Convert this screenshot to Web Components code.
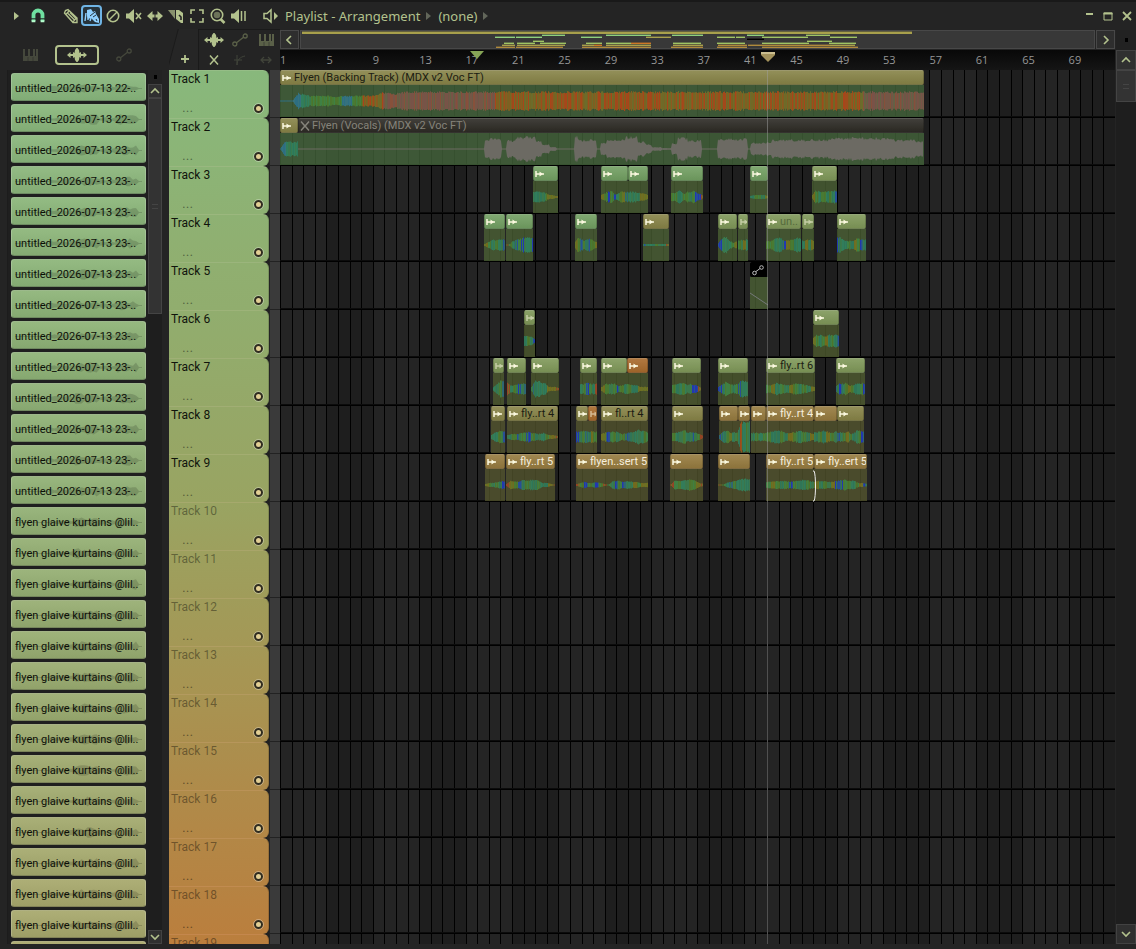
<!DOCTYPE html>
<html lang="en">
<head>
<meta charset="utf-8">
<title>Playlist - Arrangement</title>
<style>
  html, body { margin: 0; background: #242424; }
  body { font-family: Roboto, "Liberation Sans", sans-serif; color: #b3c28d; }
</style>
</head>
<body>
<fl-playlist></fl-playlist>

<script>
(function () {

  const TICKS = 835;   // length of the visible timeline
  const BARS = 72;

  // ===== ICONS =====
  const ICONS = {
    play: [8, 12, '<path d="M1 2l5 4-5 4z" fill="currentColor"/>'],
    magnet: [16, 16, '<path d="M3.500 13V7a4.500 4.500 0 0 1 9 0v6" fill="none" stroke="#6fe0a0" stroke-width="3.800"/><path d="M1 10.800h5M10 10.800h5" stroke="#242424"/><path d="M1.600 13.300h3.800M10.600 13.300h3.800" stroke="#b8ffd0" stroke-width="2"/>'],
    pencil: [16, 16, '<path d="M1.500 5l1-2.500L5 1.500l9 8.500v4.500H10zM5 5.500l6.500 6.500M3 6.500L6 3M9.500 14l4.500-4.500M7 4.500l5.500 5.500" fill="none" stroke="currentColor" stroke-width="1.400"/>'],
    brush: [16, 16, '<path d="M3 2l4-1 2 3 2-1 1 3 3 5v4l-4-1-4-4-3 1-1-3z" fill="currentColor"/><path d="M2 5L1 13M4 8v4M7 10l-1 3" fill="none" stroke="currentColor" stroke-width="1.400"/><path d="M6 8l5-4M9 9l3-2M12 11l1 2" stroke="#26333b" stroke-width="1"/>'],
    ban: [16, 16, '<circle cx="8" cy="8" r="5.700" fill="none" stroke="currentColor" stroke-width="1.600"/><path d="M4 12l8-8" stroke="currentColor" stroke-width="1.500"/>'],
    mute: [16, 16, '<path d="M0 5.500h3L8 1v14l-5-4.500H0z" fill="currentColor"/><path d="M10 5l5 6M15 5l-5 6" stroke="currentColor" stroke-width="1.600"/>'],
    slip: [16, 16, '<path d="M0 8l5.500-5v3.500h5V3L16 8l-5.500 5V9.500h-5V13z" fill="currentColor"/><path d="M8 4v8" stroke="#242424" stroke-width="1"/>'],
    slice: [16, 16, '<path d="M0 2h7v9z" fill="currentColor" opacity=".7"/><path d="M8 2h3l4 3v10h-2L8 11z" fill="currentColor"/><path d="M11 7l2 2v3" fill="none" stroke="#242424" stroke-width="1.600"/>'],
    select: [16, 16, '<path d="M2 6V2h4M10 2h4v4M14 10v4h-4M6 14H2v-4" fill="none" stroke="currentColor" stroke-width="1.600"/>'],
    zoom: [16, 16, '<circle cx="7" cy="7" r="5.700" fill="none" stroke="currentColor" stroke-width="1.600"/><circle cx="7" cy="7" r="3.300" fill="currentColor" opacity=".5"/><path d="M10.500 11l4 4" stroke="currentColor" stroke-width="2.600"/>'],
    preview: [16, 16, '<path d="M0 5.500h3L8 1v14l-5-4.500H0z" fill="currentColor"/><path d="M10.500 3v10M14 3v10" stroke="currentColor" stroke-width="1.500"/>'],
    speaker: [16, 16, '<path d="M1 5.500h3L8 2v12l-4-3.500H1z" fill="none" stroke="currentColor" stroke-width="1.500"/><path d="M11 4l4 4-4 4z" fill="currentColor"/>'],
    piano: [15, 12, '<path d="M0 0h2v7h3V0h2v7h3V0h2v7h1V0h2v12H0z" fill="currentColor"/><path d="M5 8v4M10 8v4" stroke="#242424" stroke-width=".5"/>'],
    wave: [20, 14, '<path d="M0 7l3.500-3v2H6V4l1.500 1L8 2l1.500-2h1L12 2l.5 3L14 4v2h2.500V4L20 7l-3.500 3V8H14v2l-1.500-1-.5 3-1.500 2h-1L8 12l-.5-3L6 10V8H3.500v2z" fill="currentColor"/>'],
    auto: [16, 14, '<path d="M4.500 9.700l7-5.400" stroke="currentColor" stroke-width="1.300"/><circle cx="2.800" cy="11" r="2" fill="none" stroke="currentColor" stroke-width="1.300"/><circle cx="13.200" cy="3" r="2" fill="none" stroke="currentColor" stroke-width="1.300"/>'],
    link: [14, 14, '<path d="M5 8.500l4-3" stroke="currentColor"/><circle cx="3.500" cy="10" r="1.800" fill="none" stroke="currentColor"/><circle cx="10.500" cy="4.500" r="1.800" fill="none" stroke="currentColor"/>'],
    plus: [10, 10, '<path d="M5 1v8M1 5h8" stroke="currentColor" stroke-width="1.800"/>'],
    cross: [10, 10, '<path d="M1 0.500l3.500 4h1l3.500-4M1 9.500l3.500-4h1l3.500 4" fill="none" stroke="currentColor" stroke-width="1.500"/>'],
    curve: [12, 12, '<path d="M3 1v10c0-5 3-8 8-9M0 6h8" fill="none" stroke="currentColor"/>'],
    stretch: [12, 10, '<path d="M4 2L1 5l3 3M8 2l3 3-3 3M1 5h10" fill="none" stroke="currentColor" stroke-width="1.300"/>'],
    min: [12, 12, '<path d="M3 4h7" stroke="currentColor" stroke-width="2"/>'],
    max: [12, 12, '<path d="M2 3v7h8V3z" fill="none" stroke="currentColor"/><path d="M1.500 3.500h9" stroke="currentColor" stroke-width="2"/>'],
    close: [12, 12, '<path d="M2 2l8 8M10 2l-8 8" stroke="currentColor" stroke-width="1.800"/>'],
    left: [8, 10, '<path d="M5 1L1 5l4 4" fill="none" stroke="currentColor" stroke-width="1.600"/>'],
    right: [10, 10, '<path d="M3 1l4 4-4 4" fill="none" stroke="currentColor" stroke-width="1.600"/>'],
    up: [10, 10, '<path d="M1 7l4-4 4 4" fill="none" stroke="currentColor" stroke-width="1.600"/>'],
    down: [10, 10, '<path d="M1 3l4 4 4-4" fill="none" stroke="currentColor" stroke-width="1.600"/>'],
    clip: [9, 8, '<path d="M1 1v6M1 4h8" stroke="currentColor" stroke-width="1.500"/><path d="M4.500 1.500L8 4 4.500 6.500z" fill="currentColor"/>']
  };

  class FlIcon extends HTMLElement {
    connectedCallback() {
      const [w, h, body] = ICONS[this.getAttribute("name")];
      this.attachShadow({ mode: "open" }).innerHTML = `
        <style>:host { display: block; flex: none; } svg { display: block; }</style>
        <svg width="${w}" height="${h}" viewBox="0 0 ${w} ${h}" aria-hidden="true">${body}</svg>`;
    }
  }

  // ===== WAVEFORMS =====
  const TONES = {
    t: ["#2f8563", "#3a7f52", "#2c7d60"],
    g: ["#4a8234", "#4f7b2c", "#3f8848"],
    y: ["#777522", "#6c7a24", "#7a701c"],
    b: ["#1c34c8", "#2c6a80", "#35804e", "#2450a8"],
    r: ["#a04424", "#77702a"],
    s: ["#2b7390", "#36778a"],
    o: ["#b04a18", "#85651f", "#9c5a1c", "#75702a", "#8f601e", "#7a6c24", "#bc4216"],
    p: ["#80564a", "#94503c", "#755a4a", "#84524c", "#6c6448"],
    w: ["#716f69"]
  };

  function random(seed) {
    let s = seed * 7919 + 13;
    const next = () => (s = (s * 48271) % 2147483647) / 2147483647;
    for (let i = 0; i < 5; i++) next();
    return next;
  }

  // amps: one hex digit per slice, tones: one letter per slice
  function waveSvg(len, amps, tones, seed) {
    const rnd = random(seed);
    let out = "";
    for (let x = 0; x < len; x++) {
      const pos = x / len * (amps.length - 1);
      const i = Math.floor(pos);
      const a = parseInt(amps[i], 16);
      const b = parseInt(amps[Math.min(i + 1, amps.length - 1)], 16);
      let amp = a + (b - a) * (pos - i);
      if (amp > 1) amp *= .85 + rnd() * .25;
      amp = Math.max(amp, .6);
      const set = TONES[tones[Math.floor(x / len * tones.length)]];
      const fill = set[Math.floor(rnd() * set.length)];
      out += `<path d="M${x} ${(16 - amp).toFixed(1)}h1.100v${(amp * 2).toFixed(1)}h-1.100z" fill="${fill}"/>`;
    }
    return `<svg viewBox="0 0 ${len} 32" preserveAspectRatio="none" aria-hidden="true"><g opacity=".85">${out}</g></svg>`;
  }

  // ===== CLIPS: start, end, colour, amps, tones, label, flags =====
  const G = "#729f62", H = "#7f9859", O = "#878347", Y = "#967b3f", R = "#a86a2c";
  const LANES = [
    [
      [0, 644, O, "0008655554555555688789" + "9".repeat(86), "s" + "stgggsg" + "oo" + "p".repeat(11) + "o".repeat(36) + "p".repeat(6), "Flyen (Backing Track) (MDX v2 Voc FT)", "long"]
    ],
    [
      [0, 18, O, "08777", "stt"],
      [18, 644, "#2d2b25", "", "w", "Flyen (Vocals) (MDX v2 Voc FT)", "long muted"]
    ],
    [
      [253, 278, G, "555542211", "ttttgyyyr"], [321, 348, G, "245624655", "ygbgbtgyb"], [348, 368, G, "5554432", "ttttyyy"],
      [391, 423, G, "44663556431", "ggttggtgbbr"], [470, 488, G, "12221", "tggty"], [532, 557, H, "266556665", "ygtggtgtb"]
    ],
    [
      [204, 225, G, "135565", "ygtgtb"], [226, 253, G, "014567887", "rgtbgbttb"], [295, 317, G, "486456543", "ygbgtbggy"],
      [363, 389, O, "1111111", "bttgttr"], [438, 457, H, "278424", "btttgy"], [458, 468, H, "5556", "gtyt", "", "faded"],
      [486, 521, H, "446845576", "ggttbygtt", "un..", "dim"], [522, 534, H, "4564", "tyty", "", "faded"], [557, 586, H, "874446655", "bttgtygbt"]
    ],
    [[470, 488, "#000", "", "w", "", "auto"]],
    [[244, 255, H, "5541", "tgtb", "", "faded"], [533, 559, H, "366556665", "ygtgytgtb"]],
    [
      [213, 224, H, "2587", "ttgb", "", "faded"], [227, 246, H, "7345565", "rtgtbtb"], [251, 279, H, "288652221", "bttttyyyr"],
      [300, 317, H, "556556", "tgbgtr"], [321, 347, H, "2555345", "ygtgbgt"], [347, 368, R, "544222", "gttyyy"],
      [392, 421, H, "446745431", "gttgttbbr"], [438, 468, H, "257545887", "btggtgbtt"],
      [486, 535, H, "44654465432", "gytgtygtgty", "fly..rt 6"], [556, 585, H, "3656345665", "bbtgygttgb"]
    ],
    [
      [211, 225, O, "2565", "ttgb"], [227, 278, O, "23345434221", "tgbgbgttgyr", "fly..rt 4"], [296, 308, O, "5565", "btgb"],
      [308, 317, R, "5655", "tygg", "", "faded"], [321, 368, O, "3555345764", "ybgtgbtttg", "fl..rt 4"], [392, 423, O, "446745431", "gttgttbgr"],
      [439, 458, Y, "257454", "btgytg"], [458, 470, Y, "7ffffe", "tottgt"], [471, 486, Y, "4444", "tgtg"],
      [486, 534, Y, "55764456543", "gttgtygtgty", "fly..rt 4", "light"], [534, 557, Y, "556547", "tgtygt"], [557, 584, O, "454634765", "btgygttgb"]
    ],
    [
      [205, 225, Y, "122343", "ygtgtb"], [226, 275, Y, "1443545542210", "rygbtgttgttyr", "fly..rt 5", "light"],
      [296, 368, Y, "1232232104443433222", "rgbgtbgrgtbgbttygyy", "flyen..sert 5", "light"],
      [390, 423, Y, "044556421", "rggttggyr"], [438, 470, Y, "002345666", "rgtbgtttt"],
      [486, 534, Y, "33444345543", "gygtgbgttgt", "fly..rt 5", "light"], [534, 587, Y, "3443345544221", "ytgtybbggtgyb", "fly..ert 5", "light"]
    ]
  ];

  // piecewise vocal envelope: from, to, level
  const VOCAL = [[205, 222, 11], [227, 236, 9], [236, 256, 13], [256, 262, 9], [262, 270, 5], [270, 277, 2], [295, 298, 14], [298, 317, 10], [321, 327, 7],
    [327, 346, 10], [346, 358, 13], [358, 366, 8], [366, 372, 5], [372, 382, 2], [382, 392, 1], [392, 398, 6], [398, 408, 12], [408, 422, 9],
    [438, 468, 11], [471, 492, 7], [492, 552, 10], [552, 612, 12], [612, 636, 10], [636, 644, 8]];

  function vocalSvg() {
    const rnd = random(5);
    let top = "M0 16", bottom = "";
    for (let x = 18; x < 644; x++) {
      const seg = VOCAL.find(s => x >= s[0] && x < s[1]);
      const a = seg ? seg[2] * (.72 + rnd() * .28) : .4;
      top += `L${x - 18} ${(16 - a).toFixed(1)}`;
      bottom = `L${x - 18} ${(16 + a).toFixed(1)}` + bottom;
    }
    return `<svg viewBox="0 0 626 32" preserveAspectRatio="none" aria-hidden="true"><path d="${top}${bottom}z" fill="#6c6a63"/></svg>`;
  }

  class FlClip extends HTMLElement {
    connectedCallback() {
      const [start, end, color, amps, tones, label = "", flags = ""] = this.data;
      const lane = this.lane;
      const body = lane < 2 ? "69,103,60" : lane < 5 ? "76,98,52" : lane < 7 ? "80,92,48" : "84,86,46";
      let wave = amps ? waveSvg(end - start, amps, tones, start + lane) : "";
      if (flags.includes("muted")) wave = vocalSvg();
      if (flags === "auto") wave = `<svg viewBox="0 0 18 32" preserveAspectRatio="none"><path d="M0 16l18 12" stroke="#75787a"/></svg>`;
      const icon = flags.includes("muted") ? "cross" : flags === "auto" ? "link" : "clip";
      this.style.left = `calc(100% * ${start} / ${TICKS})`;
      this.style.width = `calc(100% * ${end - start} / ${TICKS})`;
      this.attachShadow({ mode: "open" }).innerHTML = `
        <style>
          :host { position: absolute; top: 0; height: 47px; display: flex; flex-direction: column; }
          header {
            height: 15px; box-sizing: border-box; padding-left: 1px; gap: 3px;
            display: flex; align-items: center; overflow: hidden;
            background: linear-gradient(#ffffff18, #00000010), ${color};
            border: 1px solid #00000030; border-top-color: #ffffff38; border-radius: 2px;
            color: #1b1c12; font-size: 11px; line-height: 13px; white-space: nowrap;
          }
          fl-icon { color: #fbf9e0; }
          .body { flex: 1; background: rgba(${body},.78); }
          svg { display: block; width: 100%; height: 32px; }
          .faded fl-icon { opacity: .55; }
          .dim { color: #556a3c; }
          .light { color: #f6eedd; }
          .muted, .muted fl-icon { color: #85837a; }
          .muted { gap: 2px; }
          .auto { border-color: #000; padding: 0; background: #000; }
          .auto fl-icon { color: #bbb; }
        </style>
        <header class="${flags}"><fl-icon name="${icon}"></fl-icon>${label ? `<span>${label}</span>` : ""}</header>
        <div class="body">${wave}</div>`;
    }
  }

  class FlLane extends HTMLElement {
    connectedCallback() {
      this.attachShadow({ mode: "open" }).innerHTML = `
        <style>
          :host { display: block; position: relative; height: 48px; box-sizing: border-box; flex: none; border-bottom: 1px solid #000; box-shadow: inset 0 -1px #0b0b0b; }
        </style>`;
      (LANES[this.index] || []).forEach(data => {
        const clip = document.createElement("fl-clip");
        clip.data = data;
        clip.lane = this.index;
        this.shadowRoot.append(clip);
      });
    }
  }

  // ===== TIMELINE =====
  class FlTimeline extends HTMLElement {
    connectedCallback() {
      this.attachShadow({ mode: "open" }).innerHTML = `
        <style>
          :host {
            display: flex; flex-direction: column; position: relative; overflow: hidden; flex: 1; min-width: 0;
            background:
              repeating-linear-gradient(to right, #000 0 1px, transparent 1px calc(100% / ${BARS})),
              repeating-linear-gradient(to right, #242424 0 calc(100% / 18), #1e1e1e calc(100% / 18) calc(100% / 9));
          }
          .playhead { position: absolute; top: 0; bottom: 0; left: calc(100% * 487 / ${TICKS}); width: 1px; background: #a0a0a080; }
          .cursor { position: absolute; top: 400px; left: calc(100% * 533 / ${TICKS}); width: 4px; height: 32px; }
        </style>
        <div class="playhead"></div>
        <svg class="cursor" viewBox="0 0 4 32"><path d="M0 1h1c2 3 2 27 0 30h-1" fill="none" stroke="#eee"/></svg>`;
      for (let i = 18; i >= 0; i--) {
        const lane = document.createElement("fl-lane");
        lane.index = i;
        this.shadowRoot.prepend(lane);
      }
    }
  }

  class FlRuler extends HTMLElement {
    connectedCallback() {
      let marks = "";
      for (let bar = 1; bar < BARS; bar += 4) marks += `<span>${bar}</span>`;
      this.attachShadow({ mode: "open" }).innerHTML = `
        <style>
          :host {
            display: grid; grid-template-columns: repeat(18, minmax(0, 1fr)); position: relative;
            height: 20px; background: linear-gradient(#080808, #151515);
            font: 11px/20px "Open Sans", sans-serif; color: #969696;
          }
          svg { position: absolute; top: 1px; width: 14px; height: 10px; transform: translateX(-50%); }
          .loop { left: calc(100% * 197 / ${TICKS}); }
          .head { left: calc(100% * 488 / ${TICKS}); top: 2px; }
        </style>
        ${marks}
        <svg class="loop" viewBox="0 0 14 10"><path d="M0 0h14L7 8z" fill="#86a556"/></svg>
        <svg class="head" viewBox="0 0 14 10"><path d="M0 0h14v3L7 10 0 3z" fill="#a3925c"/><path d="M0 1h14" stroke="#d9cda0" stroke-width="1.500"/></svg>`;
    }
  }

  class FlMinimap extends HTMLElement {
    connectedCallback() {
      const rows = [0, 0, 3, 5, 7, 9, 11, 13, 15];
      const bright = { [G]: "#8fd07c", [H]: "#9fc464", [O]: "#a8a04c", [Y]: "#b08a3c", [R]: "#cc7826", "#000": "#000" };
      let out = "";
      LANES.forEach((lane, i) => {
        if (i === 1) return;
        lane.forEach(c => {
          const box = `x="${c[0]}" width="${c[1] - c[0]}" fill="${bright[c[2]]}"`;
          out += `<rect ${box} y="${rows[i]}" height="2" opacity=".4"/><rect ${box} y="${rows[i] + 1}" height="${i ? 1 : 2}"/>`;
        });
      });
      this.attachShadow({ mode: "open" }).innerHTML = `
        <style>
          :host { display: flex; height: 21px; gap: 1px; }
          button { flex: none; width: 19px; padding: 0; display: grid; place-content: center; background: #2e2e2e; border: 1px solid #484848; color: #b3c28d; margin: 1px 0; }
          .trough { flex: 1; min-width: 0; box-sizing: border-box; margin: 1px 0; padding: 0 1px; border: 1px solid #484848; background: #383838; }
          svg { display: block; width: 100%; height: 17px; }
        </style>
        <button aria-label="Scroll left"><fl-icon name="left"></fl-icon></button>
        <div class="trough"><svg viewBox="0 0 ${TICKS} 17" preserveAspectRatio="none" shape-rendering="crispEdges">${out}</svg></div>
        <button aria-label="Scroll right"><fl-icon name="right"></fl-icon></button>`;
    }
  }

  // ===== TRACK HEADERS =====
  // blend the track colour down the list
  function blend(stops, t) {
    const p = t * (stops.length - 1);
    const i = Math.min(Math.floor(p), stops.length - 2);
    return "rgb(" + stops[i].map((c, k) => Math.round(c + (stops[i + 1][k] - c) * (p - i))).join(",") + ")";
  }

  class FlTrackHead extends HTMLElement {
    connectedCallback() {
      const n = Number(this.getAttribute("number"));
      const stops = [[136, 184, 124], [153, 164, 98], [186, 127, 62]];
      this.attachShadow({ mode: "open" }).innerHTML = `
        <style>
          :host {
            display: grid; grid-template-columns: 1fr auto; align-content: space-between; flex: none;
            height: 48px; box-sizing: border-box; padding: 0 5px 5px 2px;
            border-radius: 0 6px 6px 0; border-top: 1px solid #ffffff18; border-right: 1px solid #00000028;
            background: linear-gradient(${blend(stops, (n - 1) / 18)}, ${blend(stops, n / 18)});
            color: ${n > 9 ? "#00000066" : "#10140c"};
          }
          .name { grid-column: 1 / 3; font-size: 12px; line-height: 16px; }
          .more { padding-left: 11px; font-size: 14px; line-height: 12px; color: #00000070; }
          button { width: 9px; height: 9px; box-sizing: border-box; padding: 0; align-self: end; border: 2px solid #2f2c20; border-radius: 50%; background: #e2cf94; outline: 1px solid #ffffff50; }
        </style>
        <span class="name">Track ${n}</span>
        ${n < 19 ? `<span class="more">...</span><button aria-label="Mute track ${n}"></button>` : ""}`;
    }
  }

  // ===== SCROLLBAR =====
  class FlScrollbar extends HTMLElement {
    connectedCallback() {
      this.attachShadow({ mode: "open" }).innerHTML = `
        <style>
          :host { display: flex; flex-direction: column; background: #1e1e1e; --cell: 14px; --thumb: 216px; }
          .dot { flex: none; height: var(--cell); display: grid; place-content: center; background: #222; }
          .dot::before { content: ""; width: 3px; height: 4px; background: #000; }
          button { flex: none; height: var(--cell); box-sizing: border-box; padding: 0; display: grid; place-content: center; background: #303030; border: 1px solid #424242; color: #b3c28d; }
          .track { flex: 1; }
          .thumb { height: var(--thumb); box-sizing: border-box; border: 1px solid #444; background: #333; display: grid; place-content: center; }
          .thumb::before { content: ""; width: 6px; height: 3px; border: solid #444; border-width: 1px 0; }
        </style>
        <div class="dot"></div>
        <button aria-label="Scroll up"><fl-icon name="up"></fl-icon></button>
        <div class="track"><div class="thumb"></div></div>
        <button aria-label="Scroll down"><fl-icon name="down"></fl-icon></button>`;
    }
  }

  // ===== SAMPLE LIST =====
  class FlSample extends HTMLElement {
    connectedCallback() {
      const i = Number(this.getAttribute("index"));
      const color = blend([[138, 184, 126], [146, 176, 116], [170, 168, 108]], i / 28);
      const rnd = random(i + 3);
      let blob = "M0 14", low = "";
      for (let x = 0; x <= 126; x += 3) {
        const a = x > 35 && x < 122 ? (x > 58 && x < 84 || x > 100 ? 4 : 2) * (.5 + rnd()) : .5;
        blob += `L${x} ${(14 - a).toFixed(1)}`;
        low = `L${x} ${(14 + a).toFixed(1)}` + low;
      }
      this.attachShadow({ mode: "open" }).innerHTML = `
        <style>
          :host { display: block; flex: none; }
          button {
            display: grid; width: 100%; height: 28px; box-sizing: border-box; padding: 1px 3px 0; align-items: center;
            border: 1px solid #ffffff30; border-bottom-color: #00000040; border-radius: 3px;
            background: linear-gradient(#ffffff10, #00000010), ${color};
            color: #0c0f08; font: 11px/25px Roboto, "Liberation Sans", sans-serif; text-align: left; white-space: nowrap;
          }
          button > * { grid-area: 1 / 1; }
          span { padding-top: 1px; }
          svg { width: 100%; height: 25px; }
        </style>
        <button><svg viewBox="0 0 126 28" preserveAspectRatio="none" aria-hidden="true"><path d="${blob}${low}z" fill="#00000026"/></svg><span><slot></slot></span></button>`;
    }
  }

  class FlBrowser extends HTMLElement {
    connectedCallback() {
      let items = "";
      for (let i = 0; i < 29; i++) {
        const text = i < 2 ? "untitled_2026-07-13 22-.." : i < 14 ? "untitled_2026-07-13 23-.." : "flyen glaive kurtains @lil..";
        items += `<fl-sample index="${i}">${i < 28 ? text : ""}</fl-sample>`;
      }
      this.attachShadow({ mode: "open" }).innerHTML = `
        <style>
          :host { display: flex; flex-direction: column; width: 169px; flex: none; min-height: 0; }
          nav { height: 41px; box-sizing: border-box; flex: none; display: flex; align-items: center; gap: 17px; padding: 10px 0 0 23px; }
          button { padding: 0; border: 0; background: none; color: #45483c; display: grid; place-content: center; }
          .on { width: 44px; height: 20px; box-sizing: border-box; border: 2px solid #b3c28d; border-radius: 4px; color: #b3c28d; }
          .list { flex: 1; min-height: 0; display: flex; margin: 0 7px 0 7px; border-left: 1px solid #1c1c1c; background: #1f1f1f; }
          .items { flex: 1; min-width: 0; display: flex; flex-direction: column; gap: 3px; padding: 3px 2px 0 3px; overflow: hidden; }
          fl-scrollbar { width: 14px; flex: none; }
        </style>
        <nav>
          <button aria-label="Patterns"><fl-icon name="piano"></fl-icon></button>
          <button class="on" aria-label="Audio clips"><fl-icon name="wave"></fl-icon></button>
          <button aria-label="Automation clips"><fl-icon name="auto"></fl-icon></button>
        </nav>
        <div class="list"><div class="items">${items}</div><fl-scrollbar></fl-scrollbar></div>`;
    }
  }

  // ===== TOOLBAR =====
  class FlToolbar extends HTMLElement {
    connectedCallback() {
      const tool = (name, label, cls = "") => `<button class="${cls}" aria-label="${label}"><fl-icon name="${name}"></fl-icon></button>`;
      this.attachShadow({ mode: "open" }).innerHTML = `
        <style>
          :host { display: flex; align-items: center; height: 29px; box-sizing: border-box; flex: none; padding: 0 0 0 6px; border-top: 2px solid #191919; color: #b3c28d; }
          button { width: 21px; height: 21px; box-sizing: border-box; padding: 0; flex: none; border: 0; background: none; color: inherit; display: grid; place-content: center; }
          .on { border: 2px solid #6fb4e4; border-radius: 4px; color: #8fd0ff; background: #26333b; }
          .first { margin-right: 12px; }
          .last { margin-right: 11px; }
          .title { display: flex; align-items: center; gap: 5px; flex: 1; margin-left: 4px; font: 13px/20px "Noto Sans", sans-serif; white-space: nowrap; }
          .title fl-icon { color: #62665a; }
          .window { display: flex; }
          .window button { width: 19px; }
        </style>
        ${tool("play", "Menu")}${tool("magnet", "Snap", "first")}
        ${tool("pencil", "Draw")}${tool("brush", "Paint", "on")}${tool("ban", "Delete")}${tool("mute", "Mute")}${tool("slip", "Slip")}${tool("slice", "Slice")}${tool("select", "Select")}${tool("zoom", "Zoom")}${tool("preview", "Playback", "last")}
        ${tool("speaker", "Preview")}
        <div class="title"><span>Playlist - Arrangement</span><fl-icon name="play"></fl-icon><span>(none)</span><fl-icon name="play"></fl-icon></div>
        <div class="window">${tool("min", "Minimize")}${tool("max", "Maximize")}${tool("close", "Close")}</div>`;
    }
  }

  class FlTrackTools extends HTMLElement {
    connectedCallback() {
      this.attachShadow({ mode: "open" }).innerHTML = `
        <style>
          :host { display: flex; width: 111px; flex: none; color: #b3c28d; }
          button { padding: 0; border: 0; background: none; color: inherit; display: grid; place-content: center; }
          .add { width: 29px; padding: 18px 0 0 3px; box-sizing: border-box; background: linear-gradient(105deg, transparent 8px, #1a1a1a 9px, #262626 10px); }
          .grid { flex: 1; display: grid; grid-template-columns: 29px 24px 1fr; grid-template-rows: 20px 20px; border-left: 1px solid #1a1a1a; border-top: 1px solid #1a1a1a; }
          .mid { color: #5a6048; }
          .dim { color: #41443a; }
        </style>
        <button class="add" aria-label="Add track"><fl-icon name="plus"></fl-icon></button>
        <div class="grid">
          <button aria-label="Audio"><fl-icon name="wave"></fl-icon></button>
          <button class="mid" aria-label="Automation"><fl-icon name="auto"></fl-icon></button>
          <button class="mid" aria-label="Patterns"><fl-icon name="piano"></fl-icon></button>
          <button aria-label="Crossfade"><fl-icon name="cross"></fl-icon></button>
          <button class="dim" aria-label="Curve"><fl-icon name="curve"></fl-icon></button>
          <button class="dim" aria-label="Stretch"><fl-icon name="stretch"></fl-icon></button>
        </div>`;
    }
  }

  // ===== PLAYLIST WINDOW =====
  class FlPlaylist extends HTMLElement {
    connectedCallback() {
      let heads = "";
      for (let n = 1; n <= 19; n++) heads += `<fl-track-head number="${n}"></fl-track-head>`;
      this.attachShadow({ mode: "open" }).innerHTML = `
        <style>
          :host { display: flex; flex-direction: column; height: 100vh; overflow: hidden; background: #242424; }
          .main { flex: 1; min-height: 0; display: flex; padding-bottom: 5px; }
          .center { flex: 1; min-width: 0; display: flex; flex-direction: column; }
          .top { display: flex; height: 41px; flex: none; }
          .scale { flex: 1; min-width: 0; }
          .arrange { flex: 1; min-height: 0; display: flex; overflow: hidden; }
          .heads { width: 100px; flex: none; display: flex; flex-direction: column; background: #202020; }
          .strip { width: 10px; flex: none; margin-left: 1px; background: repeating-linear-gradient(#3a3a3a 0 47px, #222 47px 48px); }
          .side { width: 20px; flex: none; margin: 0 0 0 1px; padding-top: 1px; display: flex; }
          .side fl-scrollbar { flex: 1; --cell: 20px; --thumb: 32px; }
        </style>
        <fl-toolbar></fl-toolbar>
        <div class="main">
          <fl-browser></fl-browser>
          <div class="center">
            <div class="top">
              <fl-track-tools></fl-track-tools>
              <div class="scale"><fl-minimap></fl-minimap><fl-ruler></fl-ruler></div>
            </div>
            <div class="arrange"><div class="heads">${heads}</div><div class="strip"></div><fl-timeline></fl-timeline></div>
          </div>
          <div class="side"><fl-scrollbar></fl-scrollbar></div>
        </div>`;
    }
  }

  customElements.define("fl-icon", FlIcon);
  customElements.define("fl-clip", FlClip);
  customElements.define("fl-lane", FlLane);
  customElements.define("fl-timeline", FlTimeline);
  customElements.define("fl-ruler", FlRuler);
  customElements.define("fl-minimap", FlMinimap);
  customElements.define("fl-track-head", FlTrackHead);
  customElements.define("fl-scrollbar", FlScrollbar);
  customElements.define("fl-sample", FlSample);
  customElements.define("fl-browser", FlBrowser);
  customElements.define("fl-toolbar", FlToolbar);
  customElements.define("fl-track-tools", FlTrackTools);
  customElements.define("fl-playlist", FlPlaylist);

})();
</script>
</body>
</html>
